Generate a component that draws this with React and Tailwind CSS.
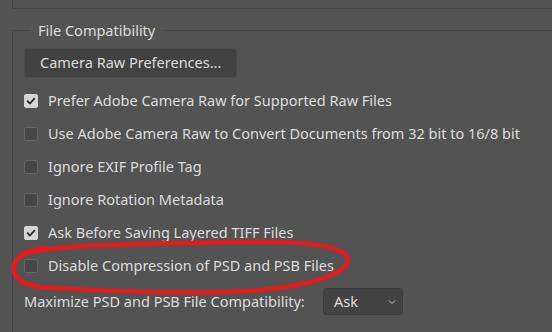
import React, { useState } from 'react';

const rows = [
  { key: 'preferAcr', label: 'Prefer Adobe Camera Raw for Supported Raw Files', checked: true },
  { key: 'convert32', label: 'Use Adobe Camera Raw to Convert Documents from 32 bit to 16/8 bit', checked: false },
  { key: 'ignoreExif', label: 'Ignore EXIF Profile Tag', checked: false },
  { key: 'ignoreRotation', label: 'Ignore Rotation Metadata', checked: false },
  { key: 'askTiff', label: 'Ask Before Saving Layered TIFF Files', checked: true },
  { key: 'disableCompression', label: 'Disable Compression of PSD and PSB Files', checked: false },
];

const Checkbox = ({ checked, onClick }) => (
  <button
    onClick={onClick}
    className={`flex h-[14px] w-[14px] shrink-0 items-center justify-center rounded-[2px] border ${checked ? 'border-[#d4d4d4] bg-[#d4d4d4]' : 'border-[#656565] bg-[#474747]'}`}
  >
    {checked && (
      <svg width="10" height="10" viewBox="0 0 10 10" fill="none">
        <path d="M1.6 5.2 L4 7.5 L8.4 2.6" stroke="#2b2b2b" strokeWidth="1.8" strokeLinecap="round" strokeLinejoin="round" />
      </svg>
    )}
  </button>
);

export default function App() {
  const [state, setState] = useState(() => Object.fromEntries(rows.map(r => [r.key, r.checked])));

  const toggle = (key) => setState(prev => ({ ...prev, [key]: !prev[key] }));

  return (
    <div
      className="relative h-[332px] w-[552px] overflow-hidden bg-[#535353] text-[14.5px] text-[#dcdcdc]"
      style={{ fontFamily: '"Noto Sans", "Open Sans", sans-serif' }}
    >
      {/* tail of the previous group */}
      <div className="ml-[12px] h-[9px] border-b border-l border-[#454545]" />

      {/* File Compatibility group */}
      <fieldset className="ml-[12px] mt-[11px] h-[317px] w-[560px] border border-[#454545] px-[11px]">
        <legend className="ml-[6px] px-[8px] leading-[20px]">File Compatibility</legend>

        <button className="mt-[8px] h-[30px] w-[213px] whitespace-nowrap rounded-[3px] border border-[#4b4b4b] bg-[#424242] px-[15px] text-left">
          Camera Raw Preferences...
        </button>

        <div className="mt-[6px]">
          {rows.map(r => (
            <label key={r.key} className="flex h-[33px] items-center gap-[10px]">
              <Checkbox checked={state[r.key]} onClick={() => toggle(r.key)} />
              <span className="whitespace-nowrap">{r.label}</span>
            </label>
          ))}
        </div>

        <div className="mt-[6px] flex h-[27px] items-center">
          <span className="w-[299px] whitespace-nowrap">Maximize PSD and PSB File Compatibility:</span>
          <div className="flex h-[27px] w-[80px] items-center justify-between rounded-[3px] border border-[#3e3e3e] bg-[#434343] pl-[10px] pr-[6px]">
            <span>Ask</span>
            <svg width="8" height="6" viewBox="0 0 8 6" fill="none">
              <path d="M1 1.5 L4 4.5 L7 1.5" stroke="#bdbdbd" strokeWidth="1" />
            </svg>
          </div>
        </div>
      </fieldset>

      {/* hand-drawn annotation */}
      <svg className="pointer-events-none absolute inset-0" width="552" height="332" viewBox="0 0 552 332" fill="none">
        <path
          d="M22 255 C40 246, 100 245, 180 243 C260 241, 330 239, 346 255 C356 270, 320 284, 260 290 C200 295, 100 291, 40 287 C15 284, 8 270, 18 258 C24 251, 34 249, 46 248"
          stroke="#e31b1d"
          strokeWidth="4.5"
          strokeLinecap="round"
          strokeLinejoin="round"
        />
      </svg>
    </div>
  );
}
